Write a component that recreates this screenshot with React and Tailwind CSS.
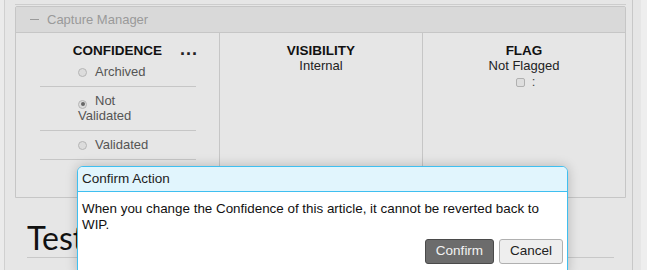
import React from "react";

const options = [
  { label: "Archived", checked: false },
  { label: "Not Validated", checked: true },
  { label: "Validated", checked: false },
];

const Radio = ({ checked }) => (
  <span className="inline-flex items-center justify-center w-[9px] h-[9px] mr-[8px] rounded-full border border-[#b5b5b5] bg-[#dcdcdc] align-[-1px]">
    {checked && <span className="w-[4px] h-[4px] rounded-full bg-[#666]" />}
  </span>
);

export default function App() {
  return (
    <div
      className="relative w-[647px] h-[270px] overflow-hidden bg-[#e6e6e6] flex"
      style={{ fontFamily: '"Liberation Sans", Arial, sans-serif' }}
    >
      {/* left strip */}
      <div className="w-[5px] h-full bg-[#ebebeb] border-r border-[#d0d0d0] shrink-0" />

      {/* main column */}
      <div className="w-[628px] h-full border-r border-[#c8c8c8] shrink-0">
        <div className="ml-[10px] w-[611px] h-[5px] border-b border-[#cdcdcd]" />

        {/* Capture Manager panel */}
        <div className="ml-[10px] mt-[1px] w-[611px] border border-[#c6c6c6] rounded-t-[2px]">
          <div className="h-[26px] bg-[#d9d9d9] border-b border-[#c6c6c6] flex items-center pl-[14px] text-[13px] text-[#9a9a9a]">
            <span className="inline-block w-[9px] h-[1.5px] bg-[#9a9a9a] mr-[8px]" />
            Capture Manager
          </div>
          <div className="grid grid-cols-3 h-[164px]">
            {/* Confidence */}
            <div className="relative pt-[10px]">
              <div className="text-center text-[13.5px] leading-[15px] font-bold text-[#111]">CONFIDENCE</div>
              <div className="absolute right-[21px] top-[3px] text-[18px] font-bold text-[#222] tracking-[1px]">...</div>
              <ul className="ml-[24px] mr-[23px]">
                {options.map((o) => (
                  <li
                    key={o.label}
                    className="border-b border-[#c6c6c6] py-[7px] pl-[38px] pr-[40px] text-[13px] leading-[14px] text-[#555]"
                  >
                    <Radio checked={o.checked} />
                    {o.label}
                  </li>
                ))}
              </ul>
            </div>

            {/* Visibility */}
            <div className="border-l border-[#c6c6c6] pt-[10px] text-center text-[13px] leading-[15px] text-[#222]">
              <div className="font-bold text-[13.5px] text-[#111]">VISIBILITY</div>
              <div className="leading-[16px]">Internal</div>
            </div>

            {/* Flag */}
            <div className="border-l border-[#c6c6c6] pt-[10px] text-center text-[13px] leading-[15px] text-[#222]">
              <div className="font-bold text-[13.5px] text-[#111]">FLAG</div>
              <div className="leading-[16px]">Not Flagged</div>
              <div className="flex items-center justify-center gap-[7px] pl-[3px] leading-[16px]">
                <span className="inline-block w-[9px] h-[9px] rounded-[2px] border border-[#b0b0b0] bg-[#dedede]" />
                <span className="text-[#444]">:</span>
              </div>
            </div>
          </div>
        </div>

        {/* Article title */}
        <h1
          className="ml-[22px] w-[587px] mt-[20px] text-[32px] leading-[39px] text-[#111] border-b border-[#c8c8c8]"
          style={{ fontFamily: "Lato, sans-serif" }}
        >
          Test
        </h1>
      </div>

      {/* right strip */}
      <div className="w-[8px] h-full bg-[#e6e6e6] shrink-0" />
      <div className="flex-1 h-full bg-[#eeeeee]" />

      {/* Confirm dialog */}
      <div className="absolute left-[77px] top-[166px] w-[491px] h-[110px] bg-white border border-[#3fbff0] rounded-[6px] shadow-[0_0_12px_rgba(0,0,0,0.22)] overflow-hidden">
        <div className="h-[25px] bg-[#e1f5fd] border-b border-[#3fbff0] flex items-center pl-[4px] text-[13.5px] text-[#222]">
          Confirm Action
        </div>
        <div className="pt-[9px] px-[4px] text-[13.4px] leading-[16px] text-[#111]">
          When you change the Confidence of this article, it cannot be reverted back to WIP.
        </div>
        <div className="flex justify-end gap-[5px] pr-[4px] mt-[6px]">
          <button className="w-[69px] h-[25px] rounded-[3px] bg-[#6c6c6c] border border-[#4a4a4a] text-[13.5px] text-[#f2f2f2]">
            Confirm
          </button>
          <button className="w-[64px] h-[25px] rounded-[3px] bg-[#eeeeee] border border-[#b0b0b0] text-[13.5px] text-[#222]">
            Cancel
          </button>
        </div>
      </div>
    </div>
  );
}
